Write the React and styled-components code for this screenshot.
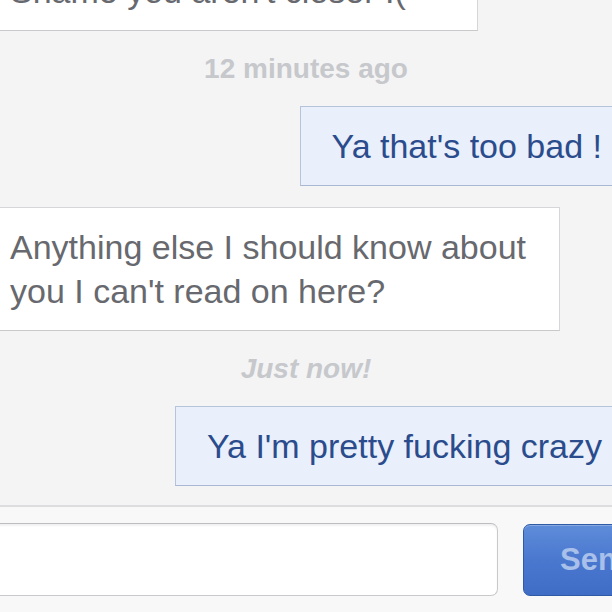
import React from 'react';
import styled, { createGlobalStyle } from 'styled-components';

const GlobalStyle = createGlobalStyle`
  html, body {
    margin: 0;
    padding: 0;
    background: #f4f4f5;
    overflow: hidden;
  }
  body {
    font-family: "Liberation Sans", Arial, Helvetica, sans-serif;
  }
`;

const Screen = styled.div`
  width: 612px;
  height: 612px;
  display: flex;
  flex-direction: column;
  overflow: hidden;
  background: #f4f4f5;
`;

const Thread = styled.div`
  flex: 1;
  min-height: 0;
  overflow: hidden;
  display: flex;
  flex-direction: column;
  justify-content: flex-end;
`;

const Messages = styled.div`
  display: flex;
  flex-direction: column;
  margin: 0 -22px;
  padding-bottom: 19px;
`;

const Bubble = styled.div`
  box-sizing: border-box;
  max-width: 582px;
  min-width: ${p => p.minWidth || 0}px;
  padding: 17px 31px;
  font-size: 34px;
  line-height: 44px;
  align-self: ${p => (p.mine ? 'flex-end' : 'flex-start')};
  background: ${p => (p.mine ? '#e9effb' : '#ffffff')};
  color: ${p => (p.mine ? '#2b4c8c' : '#67696e')};
  border: 1px solid ${p => (p.mine ? '#b5c3db' : '#d6d6d8')};
  border-bottom-color: ${p => (p.mine ? '#a9b8d2' : '#c9c9cb')};
  & + & {
    margin-top: 21px;
  }
`;

const Stamp = styled.div`
  height: 75px;
  line-height: 76px;
  text-align: center;
  font-size: 28px;
  font-weight: bold;
  font-style: ${p => (p.italic ? 'italic' : 'normal')};
  color: #c6c8cc;
`;

const Composer = styled.div`
  flex: none;
  height: 107px;
  box-sizing: border-box;
  border-top: 2px solid #dddddf;
  background: #f8f8f9;
  display: flex;
  align-items: flex-start;
  gap: 25px;
  padding-top: 16px;
  margin-left: -20px;
`;

const Field = styled.input`
  flex: none;
  box-sizing: border-box;
  width: 518px;
  height: 73px;
  border: 1px solid #c9c9cb;
  border-top-color: #bdbdbf;
  border-radius: 7px;
  background: #ffffff;
  box-shadow: inset 0 2px 2px rgba(0, 0, 0, 0.06);
  font-family: inherit;
  font-size: 30px;
  padding: 0 16px;
  outline: none;
`;

const SendButton = styled.button`
  flex: none;
  box-sizing: border-box;
  width: 150px;
  height: 72px;
  margin-top: 1px;
  padding: 0 0 0 36px;
  text-align: left;
  border: 1px solid #2f5aa5;
  border-radius: 7px;
  background: linear-gradient(to bottom, #5f8cd9 0%, #4a78cf 50%, #3f6cc5 100%);
  box-shadow: inset 0 1px 0 rgba(255, 255, 255, 0.25);
  color: #a8c0ea;
  font-family: inherit;
  font-size: 31px;
  font-weight: bold;
`;

const messages = [
  { id: 1, mine: false, text: "Shame you aren't closer :(", minWidth: 500 },
  { id: 2, stamp: '12 minutes ago' },
  { id: 3, mine: true, text: "Ya that's too bad !" },
  { id: 4, mine: false, text: "Anything else I should know about you I can't read on here?" },
  { id: 5, stamp: 'Just now!', italic: true },
  { id: 6, mine: true, text: "Ya I'm pretty fucking crazy" },
];

export default function App() {
  return (
    <Screen>
      <GlobalStyle />
      <Thread>
        <Messages>
          {messages.map(m =>
            m.stamp ? (
              <Stamp key={m.id} italic={m.italic}>{m.stamp}</Stamp>
            ) : (
              <Bubble key={m.id} mine={m.mine} minWidth={m.minWidth}>{m.text}</Bubble>
            )
          )}
        </Messages>
      </Thread>
      <Composer>
        <Field type="text" />
        <SendButton disabled>Send</SendButton>
      </Composer>
    </Screen>
  );
}
